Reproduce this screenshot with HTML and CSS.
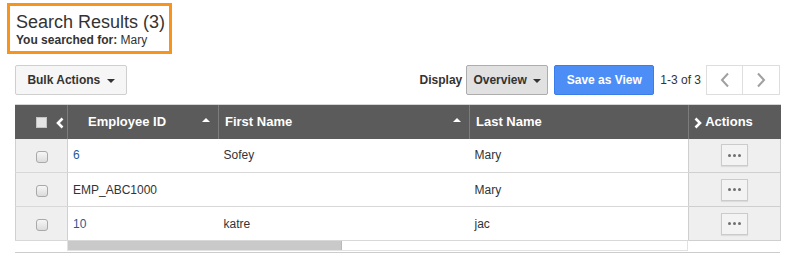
FILE: index.html
```html
<!DOCTYPE html>
<html>
<head>
  <title>Search Results</title>
  <meta name="viewport" content="width=device-width, initial-scale=1.0">
  <link rel="stylesheet" href="styles.css">
</head>
<body>
  <div class="halaman">
    <!-- Judul pencarian -->
    <div class="judul-kotak">
      <div class="judul">Search Results (3)</div>
      <div class="dicari"><b>You searched for:</b> Mary</div>
    </div>

    <!-- Toolbar -->
    <div class="toolbar">
      <button class="tombol tombol-bulk">Bulk Actions <span class="caret"></span></button>
      <div class="kanan">
        <span class="label">Display</span>
        <button class="tombol tombol-aktif">Overview <span class="caret"></span></button>
        <button class="tombol tombol-biru">Save as View</button>
        <span class="jumlah">1-3 of 3</span>
        <div class="pager">
          <button class="pager-btn">
            <svg width="10" height="16" viewBox="0 0 10 16"><path d="M8 1.5 L2 8 L8 14.5" fill="none" stroke="#a0a0a0" stroke-width="2"/></svg>
          </button>
          <button class="pager-btn">
            <svg width="10" height="16" viewBox="0 0 10 16"><path d="M2 1.5 L8 8 L2 14.5" fill="none" stroke="#a0a0a0" stroke-width="2"/></svg>
          </button>
        </div>
      </div>
    </div>

    <!-- Tabel -->
    <table class="tabel">
      <thead>
        <tr>
          <th class="kol-cek">
            <span class="cek-kepala"></span>
            <svg class="panah" width="8" height="12" viewBox="0 0 8 12"><path d="M6.5 1.5 L2 6 L6.5 10.5" fill="none" stroke="#fff" stroke-width="2.6"/></svg>
          </th>
          <th class="kol-id"><div class="isi-th"><span>Employee ID</span><span class="sort"></span></div></th>
          <th class="kol-nama"><div class="isi-th"><span>First Name</span><span class="sort"></span></div></th>
          <th class="kol-akhir"><div class="isi-th"><span>Last Name</span></div></th>
          <th class="kol-aksi">
            <svg class="panah" width="8" height="12" viewBox="0 0 8 12"><path d="M1.5 1.5 L6 6 L1.5 10.5" fill="none" stroke="#fff" stroke-width="2.6"/></svg>
            Actions
          </th>
        </tr>
      </thead>
      <tbody>
        <tr>
          <td class="kol-cek"><input type="checkbox" class="cek"></td>
          <td class="link">6</td>
          <td>Sofey</td>
          <td>Mary</td>
          <td class="kol-aksi"><button class="titik"><span></span><span></span><span></span></button></td>
        </tr>
        <tr>
          <td class="kol-cek"><input type="checkbox" class="cek"></td>
          <td>EMP_ABC1000</td>
          <td></td>
          <td>Mary</td>
          <td class="kol-aksi"><button class="titik"><span></span><span></span><span></span></button></td>
        </tr>
        <tr>
          <td class="kol-cek"><input type="checkbox" class="cek"></td>
          <td class="link">10</td>
          <td>katre</td>
          <td>jac</td>
          <td class="kol-aksi"><button class="titik"><span></span><span></span><span></span></button></td>
        </tr>
      </tbody>
    </table>

    <!-- Scrollbar horizontal -->
    <div class="gulir">
      <div class="gulir-jalur"><div class="gulir-ibu"></div></div>
    </div>
  </div>
</body>
</html>
```

FILE: styles.css
```css
body {
  margin: 0;
  padding: 0;
  background: #fff;
  font-family: 'Liberation Sans', Arial, sans-serif;
  color: #333;
}
.halaman {
  width: 765px;
  padding: 3px 0 0 15px;
}
.judul-kotak {
  display: inline-block;
  margin-left: -8px;
  padding: 6px 6px 4px 6px;
  width: 147px;
  border: 3px solid #f7941d;
  white-space: nowrap;
}
.judul {
  font-size: 18px;
  line-height: 20px;
  color: #333;
}
.dicari {
  font-size: 12px;
  line-height: 14px;
  margin-top: 1px;
  color: #333;
}
.toolbar {
  display: flex;
  justify-content: space-between;
  align-items: center;
  margin-top: 11px;
  height: 30px;
}
.kanan {
  display: flex;
  align-items: center;
}
.tombol {
  font-family: 'Liberation Sans', Arial, sans-serif;
  font-size: 12px;
  font-weight: bold;
  height: 30px;
  padding: 0;
  border: 1px solid #cfcfcf;
  border-radius: 2px;
  background: #f6f6f6;
  color: #333;
  white-space: nowrap;
  cursor: pointer;
}
.tombol-bulk {
  width: 112px;
}
.caret {
  display: inline-block;
  width: 0;
  height: 0;
  margin-left: 3px;
  vertical-align: middle;
  border-left: 4px solid transparent;
  border-right: 4px solid transparent;
  border-top: 4px solid #333;
}
.label {
  font-size: 12px;
  font-weight: bold;
  margin-right: 4px;
}
.tombol-aktif {
  width: 82px;
  background: #e1e1e1;
  border-color: #adadad;
}
.tombol-biru {
  width: 100px;
  margin-left: 6px;
  background: #4c8ef5;
  border-color: #3b7de8;
  color: #fff;
}
.jumlah {
  font-size: 12px;
  margin: 0 5px 0 6px;
}
.pager {
  display: flex;
}
.pager-btn {
  width: 37px;
  height: 30px;
  padding: 0;
  border: 1px solid #dedede;
  background: #fff;
  display: flex;
  align-items: center;
  justify-content: center;
  cursor: pointer;
}
.pager-btn + .pager-btn {
  border-left: none;
}
.tabel {
  margin-top: 9px;
  width: 765px;
  border-collapse: collapse;
  table-layout: fixed;
  font-size: 12px;
}
.tabel th,
.tabel td {
  box-sizing: border-box;
}
.tabel th {
  height: 34px;
  padding: 0;
  background: #5b5b5b;
  color: #fff;
  font-size: 13px;
  font-weight: bold;
  text-align: left;
  border-left: 1px solid #7c7c7c;
  border-top: 1px solid #d6d6d6;
}
.tabel th.kol-cek {
  border-left: 1px solid #5b5b5b;
  padding-left: 20px;
}
.isi-th {
  display: flex;
  justify-content: space-between;
  align-items: center;
  padding: 0 8px 0 6px;
}
.kol-id .isi-th {
  padding-left: 20px;
}
.sort {
  width: 0;
  height: 0;
  border-left: 4px solid transparent;
  border-right: 4px solid transparent;
  border-bottom: 4px solid #fff;
  margin-bottom: 3px;
}
.panah {
  vertical-align: middle;
}
.cek-kepala {
  display: inline-block;
  width: 11px;
  height: 11px;
  box-sizing: border-box;
  background: #e4e4e4;
  border: 1px solid #c4c4c4;
  vertical-align: middle;
  margin-right: 5px;
}
.kol-cek { width: 52px; }
.kol-id { width: 151px; }
.kol-nama { width: 251px; }
.kol-akhir { width: 219px; }
.kol-aksi { width: 92px; }
.tabel th.kol-aksi {
  padding-left: 5px;
}
.tabel td {
  height: 34px;
  padding: 0 5px;
  border-bottom: 1px solid #d8d8d8;
  color: #333;
  white-space: nowrap;
}
.tabel td.kol-cek {
  background: #efefef;
  text-align: center;
  border-left: 1px solid #d0d0d0;
  border-right: 1px solid #d0d0d0;
  padding: 0;
}
.tabel td.kol-aksi {
  background: #efefef;
  text-align: center;
  border-left: 1px solid #cfcfcf;
  border-right: 1px solid #cfcfcf;
  border-bottom-color: #cfcfcf;
}
.tabel td.link {
  color: #1f5b96;
}
.cek {
  appearance: none;
  -webkit-appearance: none;
  width: 12px;
  height: 12px;
  margin: 2px 0 0 0;
  border: 1px solid #a9a9a9;
  border-radius: 3px;
  background: linear-gradient(#f6f6f6, #dcdcdc);
  vertical-align: middle;
}
.titik {
  display: inline-flex;
  align-items: center;
  justify-content: center;
  gap: 2px;
  width: 27px;
  height: 22px;
  padding: 0;
  vertical-align: middle;
  border: 1px solid #cbcbcb;
  background: #f3f3f3;
  box-shadow: 0 1px 1px rgba(0, 0, 0, 0.08);
  cursor: pointer;
}
.titik span {
  width: 3px;
  height: 3px;
  border-radius: 50%;
  background: #6f6f6f;
}
.gulir {
  height: 11px;
  padding-left: 52px;
  border-bottom: 1px solid #cccccc;
}
.gulir-jalur {
  width: 619px;
  height: 9px;
  border: 1px solid #e2e2e2;
  border-top: none;
  background: #fff;
}
.gulir-ibu {
  width: 273px;
  height: 9px;
  background: #c9c9c9;
  border-right: 1px solid #b9b9b9;
}
```
